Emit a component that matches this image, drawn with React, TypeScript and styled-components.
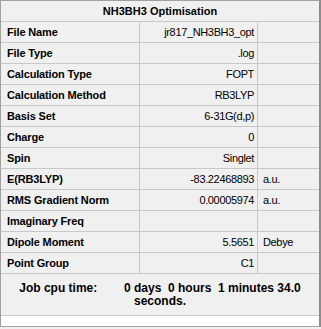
import styled, { createGlobalStyle } from "styled-components";

const GlobalStyle = createGlobalStyle`
    html, body {
        margin: 0;
        padding: 0;
        background: #f0f0f0;
    }
`;

const Panel = styled.div`
    box-sizing: border-box;
    width: 321px;
    height: 327px;
    display: flex;
    flex-direction: column;
    background: #f0f0f0;
    border: 1px solid #a0a0a0;
    border-right: 2px solid #8c8c8c;
    font-family: "Liberation Sans", Arial, sans-serif;
    font-size: 11px;
    color: #000;
`;

const Title = styled.div`
    height: 21px;
    box-sizing: border-box;
    display: flex;
    align-items: center;
    justify-content: center;
    font-weight: bold;
    border-bottom: 1px solid #c8c8c8;
`;

const Row = styled.div`
    display: grid;
    grid-template-columns: 139px 118px 1fr;
    height: 21px;
    box-sizing: border-box;
    border-bottom: 1px solid #c8c8c8;
`;

const Cell = styled.div<{ $align?: "left" | "right"; $bold?: boolean; $divider?: boolean }>`
    display: flex;
    align-items: center;
    justify-content: ${(p) => (p.$align === "right" ? "flex-end" : "flex-start")};
    box-sizing: border-box;
    white-space: nowrap;
    overflow: hidden;
    font-weight: ${(p) => (p.$bold ? "bold" : "normal")};
    letter-spacing: ${(p) => (p.$bold ? "-0.15px" : "-0.35px")};
    border-right: ${(p) => (p.$divider ? "1px solid #c8c8c8" : "none")};
`;

const Label = styled(Cell)`
    padding-left: 6px;
`;

const Value = styled(Cell)`
    padding-right: 3px;
`;

const Unit = styled(Cell)`
    padding-left: 5px;
`;

const Footer = styled.div`
    flex: 1;
    display: flex;
    align-items: center;
    justify-content: center;
`;

const CpuTime = styled.p`
    margin: 0;
    text-align: center;
    font-size: 12px;
    font-weight: bold;
    line-height: 13px;
    white-space: pre-wrap;
`;

const StatusStrip = styled.div`
    height: 10px;
    background: #ffffff;
    border-top: 1px solid #c8c8c8;
`;

const rows: [string, string, string][] = [
    ["File Name", "jr817_NH3BH3_opt", ""],
    ["File Type", ".log", ""],
    ["Calculation Type", "FOPT", ""],
    ["Calculation Method", "RB3LYP", ""],
    ["Basis Set", "6-31G(d,p)", ""],
    ["Charge", "0", ""],
    ["Spin", "Singlet", ""],
    ["E(RB3LYP)", "-83.22468893", "a.u."],
    ["RMS Gradient Norm", "0.00005974", "a.u."],
    ["Imaginary Freq", "", ""],
    ["Dipole Moment", "5.5651", "Debye"],
    ["Point Group", "C1", ""],
];

export default function App() {
    return (
        <>
            <GlobalStyle />
            <Panel>
                <Title>NH3BH3 Optimisation</Title>
                {rows.map(([label, value, unit]) => (
                    <Row key={label}>
                        <Label $bold $divider>{label}</Label>
                        <Value $align="right" $divider>{value}</Value>
                        <Unit>{unit}</Unit>
                    </Row>
                ))}
                <Footer>
                    <CpuTime>
                        {"Job cpu time:        0 days  0 hours  1 minutes 34.0\nseconds."}
                    </CpuTime>
                </Footer>
                <StatusStrip />
            </Panel>
        </>
    );
}
